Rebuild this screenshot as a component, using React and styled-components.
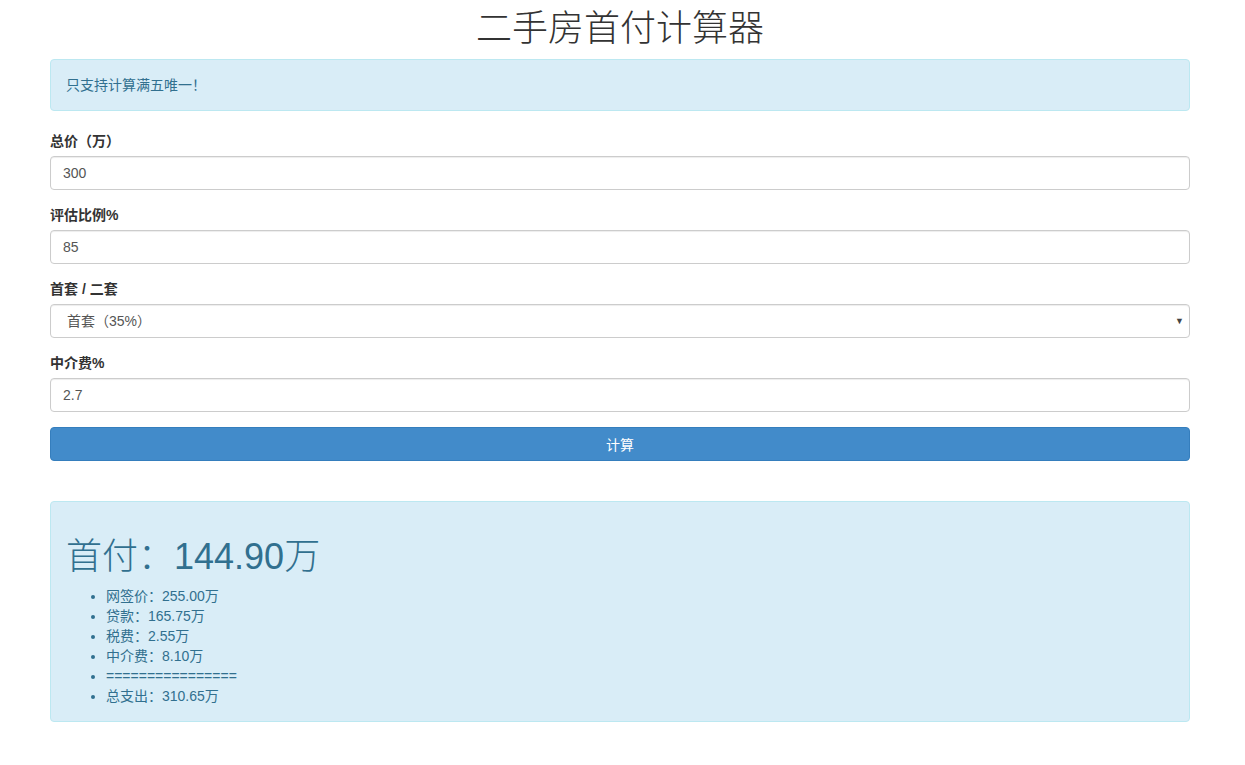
import styled, { createGlobalStyle } from "styled-components";

const GlobalStyle = createGlobalStyle`
  * { box-sizing: border-box; }
  body {
    margin: 0;
    background: #fff;
    font-family: "Liberation Sans", Arial, "Noto Sans CJK SC", sans-serif;
    font-size: 14px;
    line-height: 20px;
    color: #333;
  }
`;

const results = [
  "网签价：255.00万",
  "贷款：165.75万",
  "税费：2.55万",
  "中介费：8.10万",
  "================",
  "总支出：310.65万",
];

export default function App() {
  return (
    <>
      <GlobalStyle />
      <Container>
        <Title>二手房首付计算器</Title>
        <Alert>只支持计算满五唯一！</Alert>

        <FormGroup>
          <Label>总价（万）</Label>
          <Input defaultValue="300" />
        </FormGroup>

        <FormGroup>
          <Label>评估比例%</Label>
          <Input defaultValue="85" />
        </FormGroup>

        <FormGroup>
          <Label>首套 / 二套</Label>
          <SelectWrap>
            <Select defaultValue="first">
              <option value="first">首套（35%）</option>
              <option value="second">二套（70%）</option>
            </Select>
          </SelectWrap>
        </FormGroup>

        <FormGroup>
          <Label>中介费%</Label>
          <Input defaultValue="2.7" />
        </FormGroup>

        <Button>计算</Button>

        <Result>
          <ResultTitle>
            首付：<Amount>144.90</Amount>万
          </ResultTitle>
          <List>
            {results.map((r, i) => (
              <li key={i}>{r}</li>
            ))}
          </List>
        </Result>
      </Container>
    </>
  );
}

const Container = styled.div`
  width: 1140px;
  margin-left: 50px;
`;

const Title = styled.h1`
  margin: 5px 0 14px;
  text-align: center;
  font-family: "Noto Sans CJK SC", sans-serif;
  font-weight: 300;
  font-size: 36px;
  line-height: 40px;
  color: #333;
`;

const Alert = styled.div`
  padding: 15px;
  margin-bottom: 20px;
  border: 1px solid #bce8f1;
  border-radius: 4px;
  background: #d9edf7;
  color: #31708f;
`;

const FormGroup = styled.div`
  margin-bottom: 15px;
`;

const Label = styled.label`
  display: block;
  margin-bottom: 5px;
  font-weight: bold;
  color: #333;
`;

const Input = styled.input`
  display: block;
  width: 100%;
  height: 34px;
  padding: 6px 12px;
  font-family: inherit;
  font-size: 14px;
  color: #555;
  background: #fff;
  border: 1px solid #ccc;
  border-radius: 4px;
  box-shadow: inset 0 1px 1px rgba(0, 0, 0, 0.075);
  outline: none;
`;

const SelectWrap = styled.div`
  position: relative;

  &::after {
    content: "▼";
    position: absolute;
    right: 6px;
    top: 12px;
    font-size: 9px;
    line-height: 10px;
    color: #444;
    pointer-events: none;
  }
`;

const Select = styled.select`
  display: block;
  width: 100%;
  height: 34px;
  padding: 6px 12px 6px 16px;
  font-family: inherit;
  font-size: 14px;
  color: #555;
  background: #fff;
  border: 1px solid #ccc;
  border-radius: 4px;
  box-shadow: inset 0 1px 1px rgba(0, 0, 0, 0.075);
  appearance: none;
  outline: none;
`;

const Button = styled.button`
  display: block;
  width: 100%;
  height: 34px;
  padding: 6px 12px;
  font-family: inherit;
  font-size: 14px;
  color: #fff;
  background: #428bca;
  border: 1px solid #357ebd;
  border-radius: 4px;
  cursor: pointer;
`;

const Result = styled(Alert)`
  margin-top: 40px;
`;

const ResultTitle = styled.h1`
  margin: 16px 0 9px;
  font-family: "Noto Sans CJK SC", sans-serif;
  font-weight: 300;
  font-size: 36px;
  line-height: 40px;
  color: #31708f;
`;

const Amount = styled.span`
  font-family: "Liberation Sans", Arial, sans-serif;
  font-weight: normal;
`;

const List = styled.ul`
  margin: 0;
  padding-left: 40px;
  line-height: 20px;
`;
